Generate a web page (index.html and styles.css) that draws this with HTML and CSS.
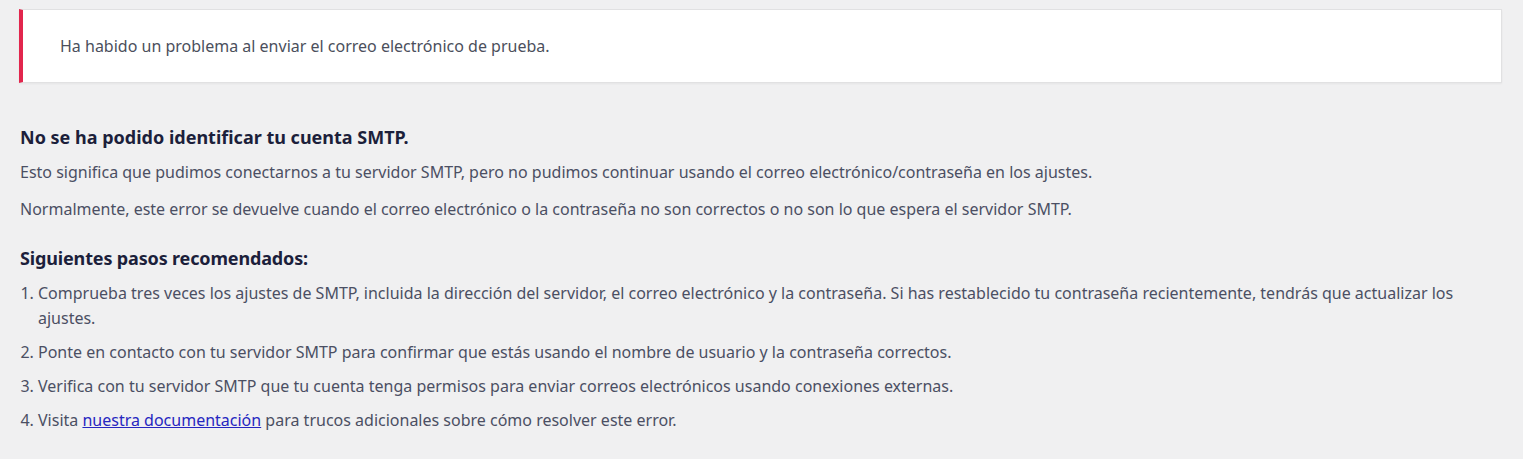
FILE: index.html
```html
<!DOCTYPE html>
<html lang="es">
<head>
<meta charset="utf-8">
<link rel="stylesheet" href="styles.css">
</head>
<body>
<div class="wrap">
  <div class="notice">
    <p>Ha habido un problema al enviar el correo electrónico de prueba.</p>
  </div>
  <div class="details">
    <h3 class="title">No se ha podido identificar tu cuenta SMTP.</h3>
    <p class="para">Esto significa que pudimos conectarnos a tu servidor SMTP, pero no pudimos continuar usando el correo electrónico/contraseña en los ajustes.</p>
    <p class="para">Normalmente, este error se devuelve cuando el correo electrónico o la contraseña no son correctos o no son lo que espera el servidor SMTP.</p>
    <h3 class="title steps-title">Siguientes pasos recomendados:</h3>
    <ol class="steps">
      <li>Comprueba tres veces los ajustes de SMTP, incluida la dirección del servidor, el correo electrónico y la contraseña. Si has restablecido tu contraseña recientemente, tendrás que actualizar los ajustes.</li>
      <li>Ponte en contacto con tu servidor SMTP para confirmar que estás usando el nombre de usuario y la contraseña correctos.</li>
      <li>Verifica con tu servidor SMTP que tu cuenta tenga permisos para enviar correos electrónicos usando conexiones externas.</li>
      <li>Visita <a href="#">nuestra documentación</a> para trucos adicionales sobre cómo resolver este error.</li>
    </ol>
  </div>
</div>
</body>
</html>
```
FILE: styles.css
```css
html, body {
  margin: 0;
  padding: 0;
  background: #f0f0f1;
}
body {
  font-family: "Noto Sans", "Open Sans", sans-serif;
  color: #4b4f63;
}
.wrap {
  padding: 9px 21px 0 19px;
}
.notice {
  background: #fff;
  border: 1px solid #e1e1e2;
  border-left: 4px solid #e2264d;
  box-shadow: 0 1px 2px rgba(0,0,0,0.05);
  height: 72px;
  display: flex;
  align-items: center;
  padding-left: 37px;
}
.notice p {
  margin: 0;
  font-size: 16px;
  color: #4b4f5c;
}
.details {
  padding: 42px 0 0 1px;
}
.title {
  margin: 0 0 11px;
  font-size: 18px;
  font-weight: 700;
  color: #1c1f3b;
  line-height: 24px;
}
.steps-title {
  letter-spacing: -0.15px;
}
.para {
  margin: 0 0 12px;
  font-size: 16px;
  line-height: 25px;
}
.steps-title {
  margin-top: 24px;
  margin-bottom: 11px;
}
.steps {
  margin: 0;
  padding-left: 18px;
  font-size: 16px;
  line-height: 25px;
}
.steps li {
  margin-bottom: 9px;
}
.steps a {
  color: #2626c0;
}
```
